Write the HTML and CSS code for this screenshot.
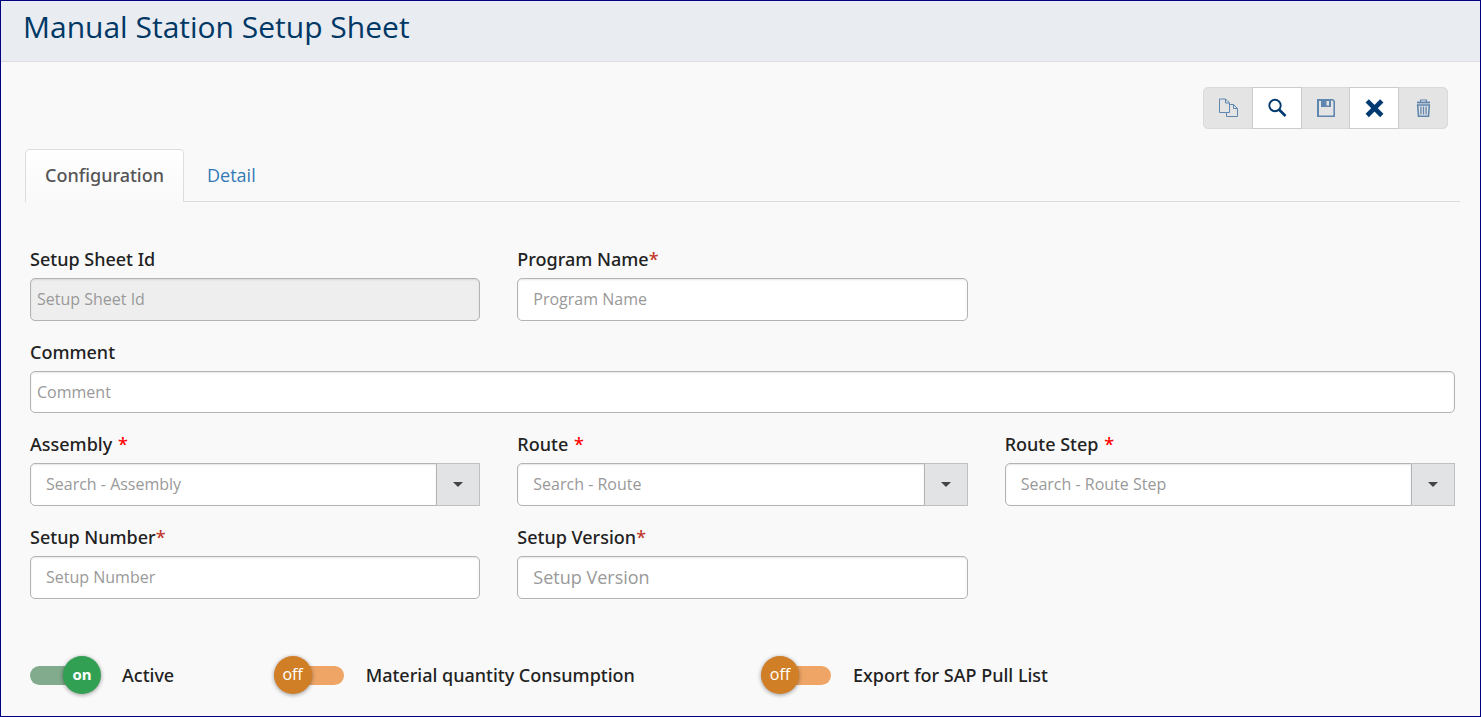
FILE: index.html
```html
<!DOCTYPE html>
<html lang="en">
<head>
<meta charset="utf-8">
<meta name="viewport" content="width=device-width, initial-scale=1">
<title>Manual Station Setup Sheet</title>
<link rel="stylesheet" href="styles.css">
</head>
<body>
<div class="page">
  <header class="page-header"><h1 class="page-title">Manual Station Setup Sheet</h1></header>
  <main class="content">
    <div class="toolbar" role="toolbar" aria-label="Actions">
      <button class="tool" type="button" aria-label="Copy" disabled>
        <svg class="icon" viewBox="0 0 20 20" fill="none" stroke="currentColor" stroke-width="1"><path d="M11.500 5.500V5L7.500 1H1.500V14.500H8.500M7.500 1V5H11.500V14.500H8.500V18.500H19.500V10.500L15.500 6.500H11.500M15.500 6.500V10.500H19.500"/></svg>
      </button>
      <button class="tool" type="button" aria-label="Search">
        <svg class="icon" viewBox="0 0 20 20" fill="none" stroke="currentColor"><circle cx="8" cy="7.500" r="5.700" stroke-width="1.900"/><path d="M12 11.500L18.500 18" stroke-width="2.600"/></svg>
      </button>
      <button class="tool tool-narrow" type="button" aria-label="Save" disabled>
        <svg class="icon" viewBox="0 0 20 20" fill="currentColor"><path fill-rule="evenodd" d="M1 1H17L19 3V19H1ZM3 3V17.400H17.400V3.600L16.400 2.600H15V9H5V3ZM10.500 3V7.500H13V3Z"/></svg>
      </button>
      <button class="tool" type="button" aria-label="Clear">
        <svg class="icon" viewBox="0 0 20 20" fill="none" stroke="currentColor" stroke-width="4.600"><path d="M3.200 2.900L17.800 17.500M17.800 2.900L3.200 17.500"/></svg>
      </button>
      <button class="tool" type="button" aria-label="Delete" disabled>
        <svg class="icon" viewBox="0 0 20 20" fill="none" stroke="currentColor"><path d="M4 4.500H17" stroke-width="1.800"/><path d="M7.500 4V2H13.500V4" stroke-width="1.200"/><path d="M4.700 7H16.300L15.500 18.300H5.500Z" stroke-width="1.600"/><path d="M7.900 8.500V16.500M10.500 8.500V16.500M13.100 8.500V16.500" stroke-width="1.300"/></svg>
      </button>
    </div>
    <nav class="tabs" aria-label="Sections">
      <a class="tab tab-active" href="#configuration" aria-current="page">Configuration</a>
      <a class="tab" href="#detail">Detail</a>
    </nav>
    <form class="form" id="configuration">
      <div class="field">
        <label class="label" for="sheet-id">Setup Sheet Id</label>
        <input class="input input-tight" id="sheet-id" type="text" placeholder="Setup Sheet Id" disabled>
      </div>
      <div class="field">
        <label class="label" for="program">Program Name<span class="required">*</span></label>
        <input class="input" id="program" type="text" placeholder="Program Name">
      </div>
      <div class="field field-wide">
        <label class="label" for="comment">Comment</label>
        <input class="input input-tight input-short" id="comment" type="text" placeholder="Comment">
      </div>
      <div class="field">
        <label class="label" for="assembly">Assembly <span class="required required-bright">*</span></label>
        <div class="combo"><input class="input combo-input" id="assembly" type="text" placeholder="Search - Assembly"><button class="combo-button" type="button" aria-label="Show assemblies"><span class="caret"></span></button></div>
      </div>
      <div class="field">
        <label class="label" for="route">Route <span class="required required-bright">*</span></label>
        <div class="combo"><input class="input combo-input" id="route" type="text" placeholder="Search - Route"><button class="combo-button" type="button" aria-label="Show routes"><span class="caret"></span></button></div>
      </div>
      <div class="field">
        <label class="label" for="step">Route Step <span class="required required-bright">*</span></label>
        <div class="combo"><input class="input combo-input" id="step" type="text" placeholder="Search - Route Step"><button class="combo-button" type="button" aria-label="Show route steps"><span class="caret"></span></button></div>
      </div>
      <div class="field">
        <label class="label" for="number">Setup Number<span class="required">*</span></label>
        <input class="input" id="number" type="text" placeholder="Setup Number">
      </div>
      <div class="field">
        <label class="label" for="version">Setup Version<span class="required">*</span></label>
        <input class="input input-large" id="version" type="text" placeholder="Setup Version">
      </div>
      <div class="switches">
        <label class="switch switch-short"><span class="switch-control"><input class="track" type="checkbox" role="switch" aria-label="Active" checked><span class="knob knob-on" aria-hidden="true">on</span></span><span>Active</span></label>
        <label class="switch"><span class="switch-control"><input class="track" type="checkbox" role="switch" aria-label="Material quantity Consumption"><span class="knob" aria-hidden="true">off</span></span><span>Material quantity Consumption</span></label>
        <label class="switch"><span class="switch-control"><input class="track" type="checkbox" role="switch" aria-label="Export for SAP Pull List"><span class="knob" aria-hidden="true">off</span></span><span>Export for SAP Pull List</span></label>
      </div>
    </form>
  </main>
</div>
</body>
</html>
```
FILE: styles.css
```css
* { box-sizing: border-box; }
body {
  margin: 0;
  background: #f9f9f9;
  color: #222;
  font-family: "Open Sans", "Noto Sans", sans-serif;
  font-size: 18px;
  line-height: 24px;
}
.page { min-height: 100vh; border: 1px solid #000080; }
.page-header {
  padding: 6px 22px 14px;
  background: #e9ecf1;
  border-bottom: 1px solid #dcdee4;
}
.page-title {
  margin: 0;
  color: #003865;
  font-size: 30px;
  font-weight: 400;
  line-height: 40px;
}
.content { padding: 25px 20px 20px 24px; }

.toolbar { display: flex; justify-content: flex-end; padding-right: 12px; }
.tool {
  display: flex;
  align-items: center;
  justify-content: center;
  width: 50px;
  height: 42px;
  margin-left: -1px;
  padding: 0;
  background: #fff;
  border: 1px solid #ccc;
  color: #003a70;
}
.tool:disabled { background: #e4e4e4; border-color: #d9d9d9; color: #5f86ae; }
.tool:not(:disabled) { z-index: 1; }
.tool:first-child { border-radius: 5px 0 0 5px; }
.tool:last-child { border-radius: 0 5px 5px 0; }
.tool-narrow { width: 49px; }
.icon { width: 20px; height: 20px; }

.tabs { display: flex; margin-top: 20px; border-bottom: 1px solid #ddd; }
.tab {
  height: 52px;
  padding: 13px 22px;
  border: 1px solid transparent;
  color: #337ab7;
  font-size: 18px;
  text-decoration: none;
}
.tab-active {
  height: 53px;
  margin-bottom: -1px;
  padding: 13px 19px;
  background: linear-gradient(#fff, #f9f9f9);
  border-color: #ddd;
  border-bottom: 0;
  border-radius: 5px 5px 0 0;
  color: #555;
}
.tab-active,
.label,
.switch {
  font-family: "Noto Sans", "Open Sans", sans-serif;
  font-weight: 500;
}

.form {
  display: grid;
  grid-template-columns: repeat(3, 1fr);
  gap: 19px 37px;
  padding: 45px 5px 0;
}
.field:nth-child(1) { grid-column: 1; }
.field-wide { grid-column: 1 / -1; }
.label { display: block; margin-bottom: 7px; }
.required { color: #c0392b; }
.required-bright { margin-left: 1px; color: #f00; }
.input {
  display: block;
  width: 100%;
  height: 43px;
  padding: 0 15px 1px;
  background: #fff;
  border: 1px solid #b3b3b3;
  border-radius: 5px;
  box-shadow: inset 0 1px 2px rgba(0, 0, 0, 0.1);
  color: #333;
  font-family: inherit;
  font-size: 16px;
}
.input::placeholder { color: #999; opacity: 1; }
.input:disabled { background: #eee; }
.input-tight { padding: 0 6px 1px; }
.input-short { height: 42px; padding-bottom: 0; }
.input-large { font-size: 18px; }
.field-wide + .field { grid-column: 1; }
.combo { display: flex; }
.combo-input { flex: 1; min-width: 0; border-radius: 5px 0 0 5px; }
.combo-button {
  display: flex;
  align-items: center;
  justify-content: center;
  width: 43px;
  padding: 0;
  background: #e2e3e5;
  border: 1px solid #bfc0c2;
  border-left: 0;
}
.caret { border: 5px solid transparent; border-top-color: #444; border-bottom: 0; }

.switches {
  display: grid;
  grid-column: 1 / -1;
  grid-template-columns: repeat(6, 1fr);
  column-gap: 37px;
  margin-top: 38px;
}
.switch { display: flex; grid-column: span 2; gap: 21px; align-items: center; white-space: nowrap; }
.switch-short { grid-column: span 1; }
.switch-control { display: grid; align-items: center; width: 71px; }
.track {
  grid-area: 1 / 1;
  width: 70px;
  height: 19px;
  margin: 0;
  appearance: none;
  background: #eea566;
  border-radius: 10px;
}
.track:checked { background: #82aa8d; }
.knob {
  grid-area: 1 / 1;
  width: 38px;
  height: 38px;
  background: #d17f27;
  border-radius: 50%;
  box-shadow: 0 1px 4px rgba(0, 0, 0, 0.4);
  color: #fff;
  font-family: "Open Sans", "Noto Sans", sans-serif;
  font-size: 16px;
  font-weight: 400;
  line-height: 37px;
  text-align: center;
}
.knob-on { justify-self: end; background: #31a052; font-size: 15px; font-weight: 700; }
```
